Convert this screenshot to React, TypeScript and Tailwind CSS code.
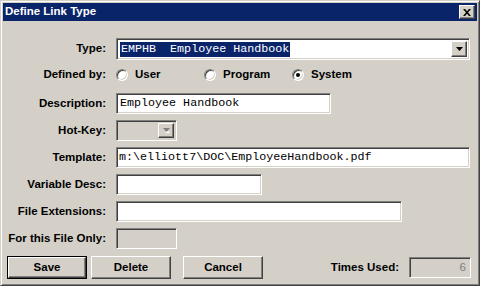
import React from 'react';

const sunken =
  'border border-t-[#808080] border-l-[#808080] border-r-white border-b-white shadow-[inset_1px_1px_#404040,inset_-1px_-1px_#d4d0c8]';
const raised =
  'border border-t-white border-l-white border-r-[#404040] border-b-[#404040] shadow-[inset_-1px_-1px_#808080]';
const mono = "font-['Liberation_Mono','Courier_New',monospace] text-[11.7px] text-black";

function Arrow({ disabled = false }: { disabled?: boolean }) {
  return (
    <div className={`flex h-full w-[16px] items-center justify-center bg-[#d4d0c8] ${raised}`}>
      <svg width="7" height="5" viewBox="0 0 7 5">
        {disabled && <path d="M2 5h5L4.5 2.5z" fill="#fff" />}
        <path d="M0 0h7L3.5 4z" fill={disabled ? '#808080' : '#000'} />
      </svg>
    </div>
  );
}

function Row({ label, children, h = 'h-[21px]' }: { label: string; children: React.ReactNode; h?: string }) {
  return (
    <div className={`flex items-center ${h}`}>
      <div className="w-[103px] shrink-0 text-right font-bold">{label}</div>
      <div className="ml-[10px] flex h-full items-center">{children}</div>
    </div>
  );
}

function Radio({ label, checked = false }: { label: string; checked?: boolean }) {
  return (
    <div className="flex w-[88px] items-center">
      <div
        className={`flex h-[12px] w-[12px] items-center justify-center rounded-full bg-white ${sunken}`}
      >
        {checked && <div className="h-[4px] w-[4px] rounded-full bg-black" />}
      </div>
      <span className="ml-[7px] font-bold">{label}</span>
    </div>
  );
}

function Button({ label, w, def = false }: { label: string; w: string; def?: boolean }) {
  const inner = (
    <div className={`flex h-full w-full items-center justify-center bg-[#d4d0c8] font-bold ${raised}`}>
      {label}
    </div>
  );
  if (def) {
    return <div className={`h-[23px] ${w} border border-black`}>{inner}</div>;
  }
  return <div className={`h-[23px] ${w}`}>{inner}</div>;
}

export default function App() {
  return (
    <div className="h-[286px] w-[480px] border border-t-[#d4d0c8] border-l-[#d4d0c8] border-r-[#404040] border-b-[#404040] bg-[#d4d0c8] p-[2px] shadow-[inset_1px_1px_#fff,inset_-1px_-1px_#808080] font-['Liberation_Sans',Arial,sans-serif] text-[11.5px] text-black">
      <div className="flex h-[18px] items-center justify-between bg-[#0a246a] pl-[2px] pr-[2px]">
        <span className="text-[11.5px] font-bold text-white">Define Link Type</span>
        <div className={`flex h-[14px] w-[16px] items-center justify-center bg-[#d4d0c8] ${raised}`}>
          <svg width="8" height="7" viewBox="0 0 8 7">
            <path d="M0 0h2l2 2.2L6 0h2L5 3.5 8 7H6L4 4.8 2 7H0l3-3.5z" fill="#000" />
          </svg>
        </div>
      </div>

      <div className="flex flex-col">
        <div className="mt-[17px]">
          <Row label="Type:" h="h-[22px]">
            <div className={`flex h-[22px] w-[354px] items-center bg-white p-[2px] ${sunken}`}>
              <div className="flex flex-1 items-center pl-[1px]">
                <span className={`bg-[#0a246a] px-[1px] leading-[15px] whitespace-pre ${mono} text-white`}>
                  EMPHB  Employee Handbook
                </span>
              </div>
              <Arrow />
            </div>
          </Row>
        </div>

        <div className="mt-[5px]">
          <Row label="Defined by:" h="h-[20px]">
            <Radio label="User" />
            <Radio label="Program" />
            <Radio label="System" checked />
          </Row>
        </div>

        <div className="mt-[8px] flex flex-col gap-[6px]">
          <Row label="Description:">
            <div className={`flex h-[21px] w-[215px] items-center bg-white pl-[3px] ${sunken} ${mono}`}>
              Employee Handbook
            </div>
          </Row>
          <Row label="Hot-Key:">
            <div className={`flex h-[21px] w-[61px] items-center justify-end bg-[#d4d0c8] p-[2px] ${sunken}`}>
              <Arrow disabled />
            </div>
          </Row>
          <Row label="Template:">
            <div className={`flex h-[21px] w-[354px] items-center bg-white pl-[2px] ${sunken} ${mono}`}>
              m:\elliott7\DOC\EmployeeHandbook.pdf
            </div>
          </Row>
          <Row label="Variable Desc:">
            <div className={`h-[21px] w-[146px] bg-white ${sunken}`} />
          </Row>
          <Row label="File Extensions:">
            <div className={`h-[21px] w-[286px] bg-white ${sunken}`} />
          </Row>
          <Row label="For this File Only:">
            <div className={`h-[21px] w-[61px] bg-[#d4d0c8] ${sunken}`} />
          </Row>
        </div>

        <div className="mt-[7px] flex items-center pl-[4px]">
          <Button label="Save" w="w-[80px]" def />
          <div className="ml-[4px]">
            <Button label="Delete" w="w-[80px]" />
          </div>
          <div className="ml-[12px]">
            <Button label="Cancel" w="w-[80px]" />
          </div>
          <span className="ml-auto font-bold">Times Used:</span>
          <div
            className={`ml-[10px] mr-[6px] flex h-[21px] w-[62px] items-center justify-end bg-[#d4d0c8] pr-[4px] text-[#808080] ${sunken}`}
          >
            6
          </div>
        </div>
      </div>
    </div>
  );
}
